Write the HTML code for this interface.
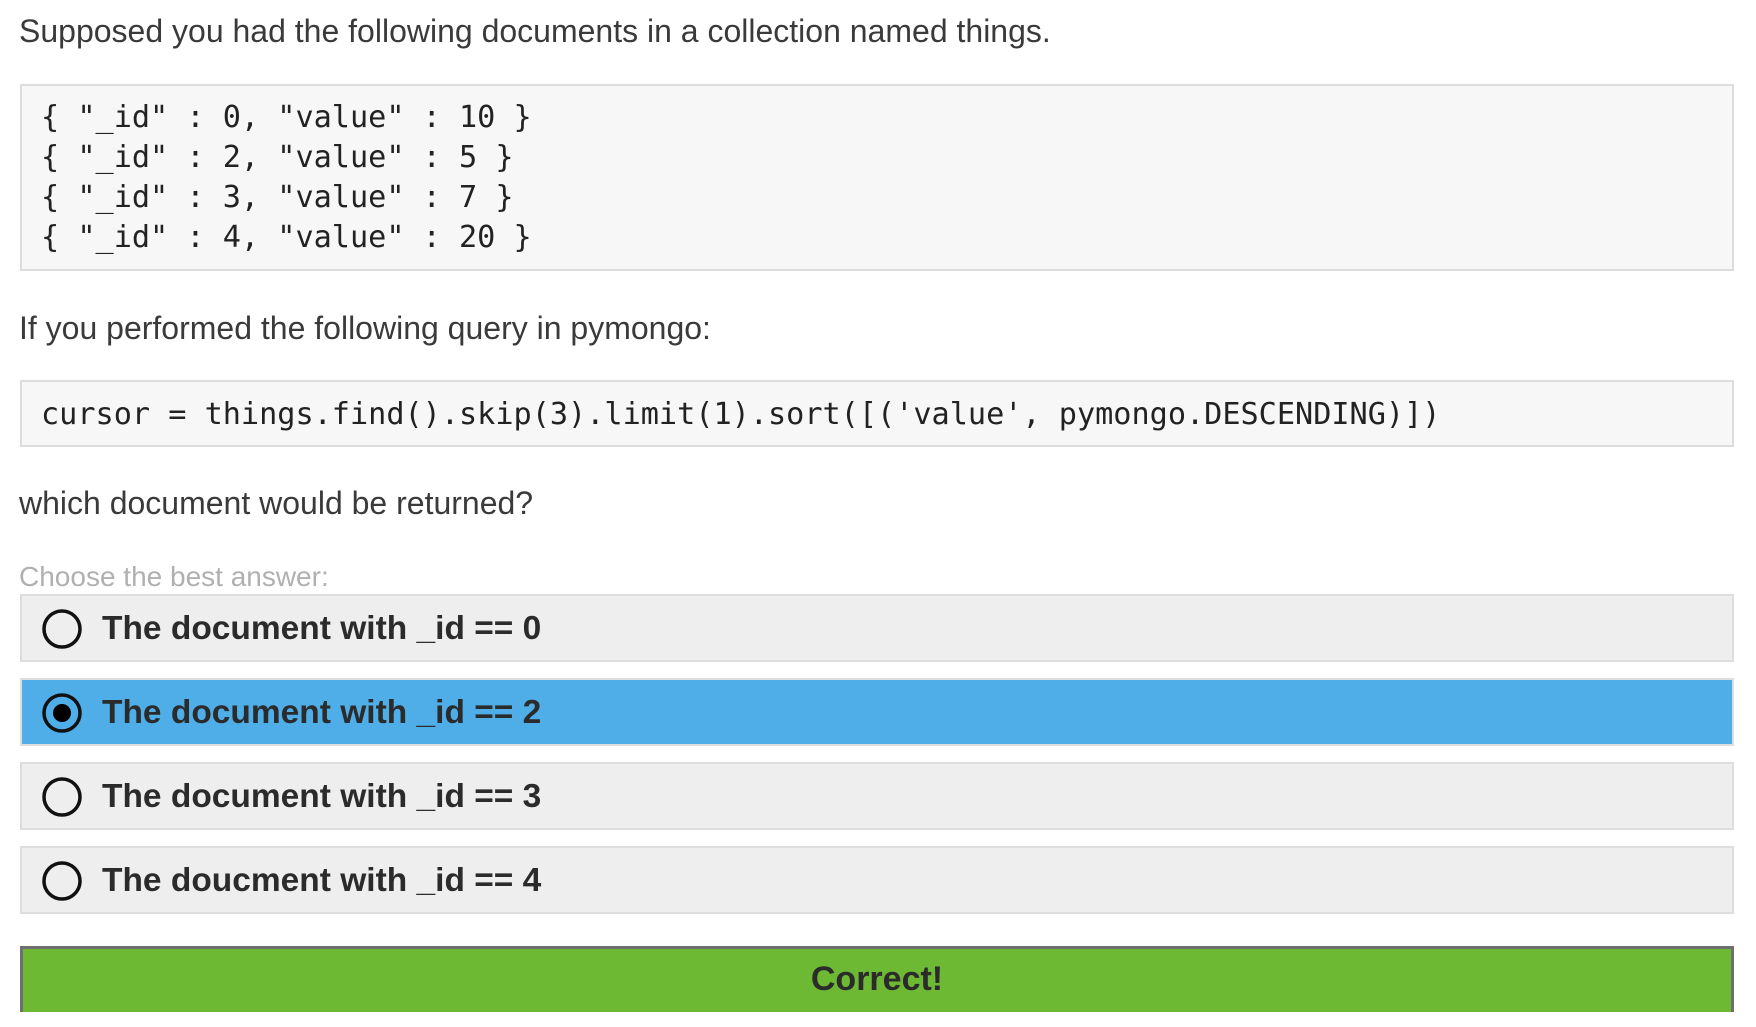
<!DOCTYPE html>
<html><head><meta charset="utf-8"><style>
*{margin:0;padding:0;box-sizing:border-box}
body{width:1756px;height:1027px;overflow:hidden;background:#fff;font-family:"Liberation Sans",Helvetica,sans-serif;color:#333;position:relative}
.t{position:absolute;left:19px;font-size:32px;color:#3a3a3a;white-space:nowrap;line-height:40px}
.code{position:absolute;left:20px;width:1714px;background:#f7f7f7;border:2px solid #ddd;font-family:"DejaVu Sans Mono","Liberation Mono",monospace;font-size:30.2px;line-height:40px;padding-left:19px;color:#222;white-space:pre}
.opt{position:absolute;left:20px;width:1714px;height:68px;background:#eee;border:2px solid #ddd}
.opt.sel{background:#4faee7}
.opt svg{position:absolute;left:19px;top:12px}
.opt span{position:absolute;left:80px;top:1px;line-height:64px;font-weight:bold;font-size:33.5px;color:#2b2b2b;white-space:nowrap}
.ok{position:absolute;left:20px;top:946px;width:1714px;height:66px;background:#6db934;border-top:3px solid #6f6f6f;border-left:3px solid #6f6f6f;border-right:3px solid #6f6f6f;text-align:center;font-weight:bold;font-size:34px;line-height:60px;color:#2b2b2b}
</style></head><body>
<div class="t" style="top:11px">Supposed you had the following documents in a collection named things.</div>
<div class="code" style="top:84px;height:187px;padding-top:12px">{ "_id" : 0, "value" : 10 }
{ "_id" : 2, "value" : 5 }
{ "_id" : 3, "value" : 7 }
{ "_id" : 4, "value" : 20 }</div>
<div class="t" style="top:308px">If you performed the following query in pymongo:</div>
<div class="code" style="top:380px;height:67px;padding-top:13px">cursor = things.find().skip(3).limit(1).sort([('value', pymongo.DESCENDING)])</div>
<div class="t" style="top:483px">which document would be returned?</div>
<div class="t" style="top:557px;color:#b0b0b0;font-size:28px">Choose the best answer:</div>
<div class="opt" style="top:594px"><svg width="42" height="42"><circle cx="21" cy="21" r="18" fill="none" stroke="#111" stroke-width="3.5"/></svg><span>The document with _id == 0</span></div>
<div class="opt sel" style="top:678px"><svg width="42" height="42"><circle cx="21" cy="21" r="18" fill="none" stroke="#111" stroke-width="3.5"/><circle cx="21" cy="21" r="9" fill="#000"/></svg><span>The document with _id == 2</span></div>
<div class="opt" style="top:762px"><svg width="42" height="42"><circle cx="21" cy="21" r="18" fill="none" stroke="#111" stroke-width="3.5"/></svg><span>The document with _id == 3</span></div>
<div class="opt" style="top:846px"><svg width="42" height="42"><circle cx="21" cy="21" r="18" fill="none" stroke="#111" stroke-width="3.5"/></svg><span>The doucment with _id == 4</span></div>
<div class="ok">Correct!</div>
</body></html>
